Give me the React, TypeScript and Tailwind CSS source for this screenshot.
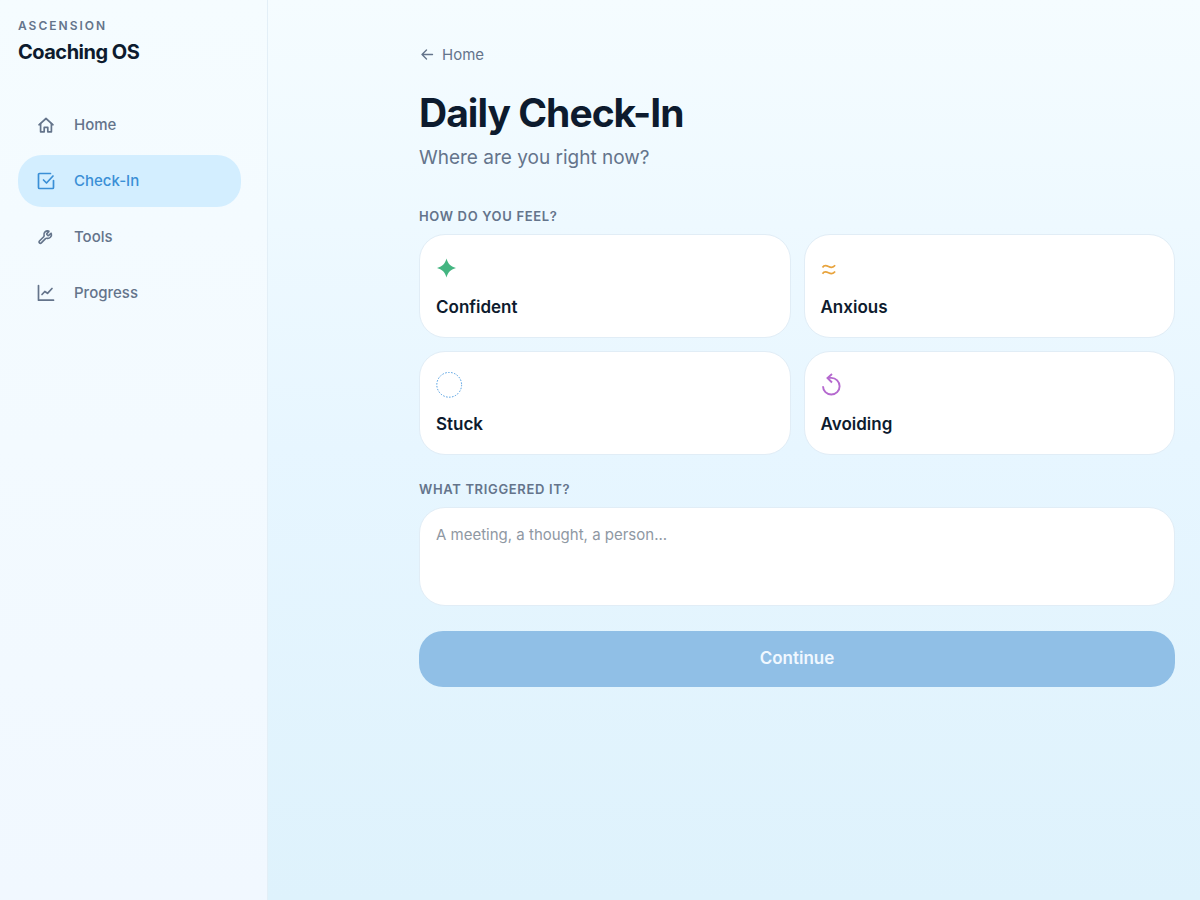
import React from "react";

type NavItem = {
  id: string;
  label: string;
  icon: React.ReactNode;
};

type Feeling = {
  id: string;
  label: string;
  icon: React.ReactNode;
};

const NavIcon: React.FC<{ children: React.ReactNode }> = ({ children }) => (
  <svg
    viewBox="0 0 20 20"
    className="size-5 shrink-0"
    fill="none"
    stroke="currentColor"
    strokeWidth="1.7"
    strokeLinecap="round"
    strokeLinejoin="round"
    aria-hidden="true"
  >
    {children}
  </svg>
);

const navItems: NavItem[] = [
  {
    id: "home",
    label: "Home",
    icon: (
      <NavIcon>
        <path d="M3 9.8 10 3.5l7 6.3" />
        <path d="M4.6 8.6v8.2h3.6v-4.400h3.600v4.400h3.600V8.600" />
      </NavIcon>
    ),
  },
  {
    id: "check-in",
    label: "Check-In",
    icon: (
      <NavIcon>
        <path d="M14.5 2.5h-11a1 1 0 0 0-1 1v13a1 1 0 0 0 1 1h13a1 1 0 0 0 1-1V9.5" />
        <path d="m7.500 9 3 3L17 5" />
      </NavIcon>
    ),
  },
  {
    id: "tools",
    label: "Tools",
    icon: (
      <NavIcon>
        <g transform="translate(1.6 2.6) scale(.63)" strokeWidth="2.6">
          <path d="M14.7 6.3a1 1 0 0 0 0 1.4l1.6 1.6a1 1 0 0 0 1.4 0l3.1-3.1c.3-.3.9-.2 1 .2a6 6 0 0 1-7.3 7.4 1.9 1.9 0 0 0-1.9.5l-6.7 6.8a2.1 2.1 0 0 1-3-3l6.8-6.7a1.9 1.9 0 0 0 .5-1.9 6 6 0 0 1 7.4-7.3c.4.1.5.7.2 1z" />
        </g>
      </NavIcon>
    ),
  },
  {
    id: "progress",
    label: "Progress",
    icon: (
      <NavIcon>
        <path d="M2.5 2.5v14.7h15" />
        <path d="m6 11.5 2.8-3 2.700 1.800L16 5.500" />
      </NavIcon>
    ),
  },
];

const feelings: Feeling[] = [
  {
    id: "confident",
    label: "Confident",
    icon: (
      <svg viewBox="0 0 28 28" className="size-7" fill="#44b581" aria-hidden="true">
        <path d="M10.500 3.500c1.400 5 3.600 7.800 9.500 9.500-5.900 1.700-8.100 4.500-9.500 9.500-1.400-5-3.600-7.800-9.500-9.500 5.900-1.700 8.100-4.500 9.500-9.500z" />
      </svg>
    ),
  },
  {
    id: "anxious",
    label: "Anxious",
    icon: (
      <svg
        viewBox="0 0 28 28"
        className="size-7"
        fill="none"
        stroke="#e8a33c"
        strokeWidth="1.7"
        aria-hidden="true"
      >
        <path d="M1.500 12.500c1.500-2.500 3.800-2.200 6-1s4.600 1.600 6.600-1.200" />
        <path d="M1.500 18.700c1.500-2.500 3.800-2.200 6-1s4.600 1.600 6.600-1.200" />
      </svg>
    ),
  },
  {
    id: "stuck",
    label: "Stuck",
    icon: (
      <svg
        viewBox="0 0 28 28"
        className="size-7"
        fill="none"
        stroke="#4a9ae0"
        strokeWidth="1"
        strokeDasharray="1.5 1.5"
        aria-hidden="true"
      >
        <circle cx="13.2" cy="12.8" r="12.4" />
      </svg>
    ),
  },
  {
    id: "avoiding",
    label: "Avoiding",
    icon: (
      <svg
        viewBox="0 0 28 28"
        className="size-7"
        fill="none"
        stroke="#b569cf"
        strokeWidth="1.9"
        aria-hidden="true"
      >
        <path d="M2 14.200a8.300 8.300 0 1 0 8.300-8.300H6.500" />
        <path d="M11 2 6.500 6l4.500 4.500" />
      </svg>
    ),
  },
];

const Sidebar: React.FC = () => (
  <aside className="w-[268px] shrink-0 border-r border-[#e3eff7] bg-linear-to-b from-[#f5fcff] to-[#f1f8ff] pt-[18px] pr-[26px] pl-[18px]">
    <p className="text-xs leading-4 font-semibold tracking-[2px] text-[#64748b]">ASCENSION</p>
    <p className="mt-1 text-xl leading-7 font-bold tracking-tight text-[#0d1b2e]">Coaching OS</p>
    <nav className="mt-[33px] flex flex-col gap-1">
      {navItems.map((item) => (
        <a
          key={item.id}
          href={`#${item.id}`}
          aria-current={item.id === "check-in" ? "page" : undefined}
          className={
            item.id === "check-in"
              ? "flex h-13 items-center gap-[18px] rounded-3xl bg-[#d3eeff] px-[18px] text-[15px] font-medium text-[#3a8fd6]"
              : "flex h-13 items-center gap-[18px] rounded-3xl px-[18px] text-[15px] font-medium text-[#64748b]"
          }
        >
          {item.icon}
          {item.label}
        </a>
      ))}
    </nav>
  </aside>
);

const App: React.FC = () => (
  <div className="flex min-h-screen bg-linear-to-b from-[#f5fcff] via-[#e7f6ff] to-[#def2fc] font-[Inter,sans-serif]">
    <Sidebar />

    <main className="min-w-0 flex-1 pt-[45px] pr-[25px] pb-12 pl-[151px]">
      <a href="#home" className="flex items-center gap-[7px] text-[15px] leading-5 text-[#64748b]">
        <svg
          viewBox="0 0 16 16"
          className="size-4"
          fill="none"
          stroke="currentColor"
          strokeWidth="1.4"
          strokeLinecap="round"
          strokeLinejoin="round"
          aria-hidden="true"
        >
          <path d="M13.500 7.500H3M7.500 3 3 7.500 7.500 12" />
        </svg>
        Home
      </a>

      <h1 className="mt-6 text-[39px] leading-12 font-bold tracking-tight text-[#0d1b2e]">
        Daily Check-In
      </h1>
      <p className="mt-[7px] text-[19px] leading-7 text-[#64748b]">Where are you right now?</p>

      <section aria-labelledby="feel-label" className="mt-9">
        <h2
          id="feel-label"
          className="text-[13px] leading-4 font-semibold tracking-wider text-[#64748b]"
        >
          HOW DO YOU FEEL?
        </h2>
        <div className="mt-[10px] grid grid-cols-2 gap-[13px]">
          {feelings.map((feeling) => (
            <button
              key={feeling.id}
              type="button"
              className="flex h-26 flex-col items-start justify-between rounded-[26px] border border-[#e1edf6] bg-white px-4 pt-5 pb-4 text-left"
            >
              {feeling.icon}
              <span className="text-[17px] leading-7 font-semibold text-[#0d1b2e]">
                {feeling.label}
              </span>
            </button>
          ))}
        </div>
      </section>

      <label
        htmlFor="trigger"
        className="mt-[26px] block text-[13px] leading-4 font-semibold tracking-wider text-[#64748b]"
      >
        WHAT TRIGGERED IT?
      </label>
      <textarea
        id="trigger"
        placeholder="A meeting, a thought, a person..."
        className="mt-[10px] block h-[99px] w-full resize-none rounded-[26px] border border-[#e1edf6] bg-white px-4 py-[15px] text-[15px] leading-6 text-[#0d1b2e] placeholder:text-[#8f98a3]"
      />

      <button
        type="button"
        className="mt-[25px] h-14 w-full rounded-3xl bg-[#90bfe6] text-[17px] font-semibold text-[#f0f8ff]"
      >
        Continue
      </button>
    </main>
  </div>
);

export default App;
